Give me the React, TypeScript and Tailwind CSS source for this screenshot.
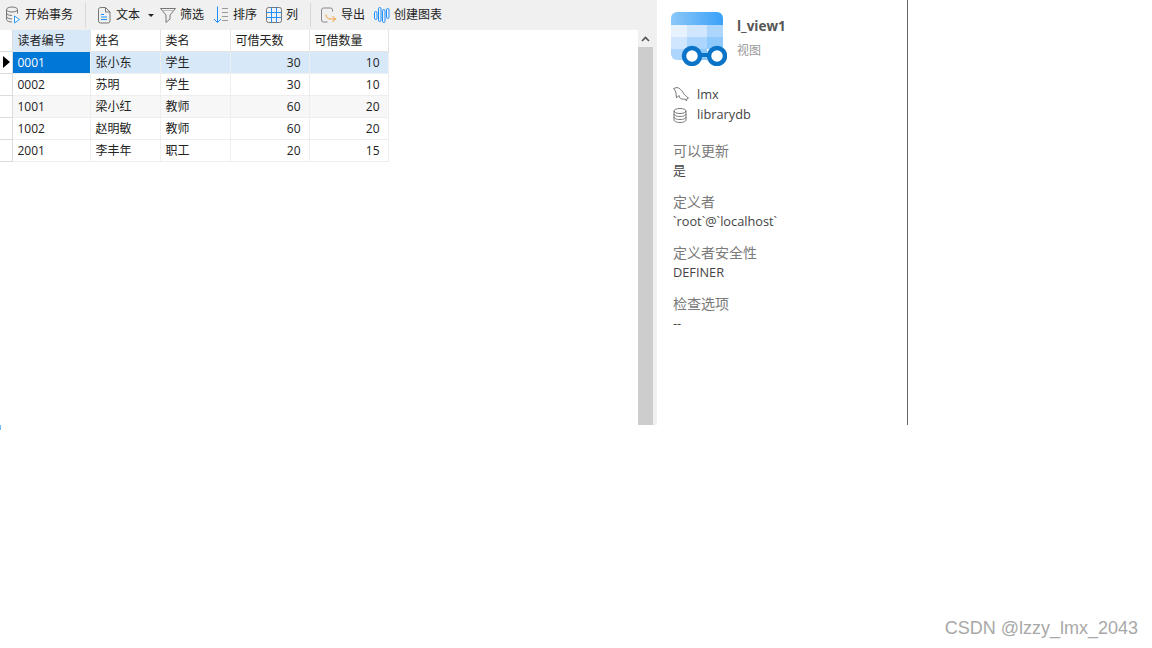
import React from 'react';

const font = "font-['Open_Sans','Noto_Sans_CJK_SC',sans-serif]";

const rows = [
  ['0001', '张小东', '学生', '30', '10'],
  ['0002', '苏明', '学生', '30', '10'],
  ['1001', '梁小红', '教师', '60', '20'],
  ['1002', '赵明敏', '教师', '60', '20'],
  ['2001', '李丰年', '职工', '20', '15'],
];

const headers = ['读者编号', '姓名', '类名', '可借天数', '可借数量'];

const DbIcon = () => (
  <svg width="16" height="18" viewBox="0 0 16 18" fill="none" stroke="#777" strokeWidth="1">
    <ellipse cx="7" cy="3.5" rx="5.5" ry="2.5" />
    <path d="M1.5 3.5v10c0 1.4 2.5 2.5 5.5 2.5M12.5 3.5v4M1.5 7c0 1.4 2.5 2.5 5.5 2.5M1.5 10.5C1.5 11.900 4 13 7 13" />
    <path d="M9.500 10l5 3.500-5 3.500z" fill="#fff" stroke="#2b9af3" />
  </svg>
);

const DocIcon = () => (
  <svg width="14" height="17" viewBox="0 0 14 17" fill="none">
    <path d="M1.500 2.500a2 2 0 0 1 2-2h5l4.500 4.500v9a2 2 0 0 1-2 2h-7.500a2 2 0 0 1-2-2z" stroke="#777" />
    <path d="M8.500 .5v4.500h4.500" stroke="#777" />
    <path d="M4 7.500h3M4 10h6M4 12.500h6" stroke="#1e90ff" />
  </svg>
);

const FunnelIcon = () => (
  <svg width="16" height="16" viewBox="0 0 16 16" fill="none" stroke="#777">
    <path d="M.5 1.500h15l-5.500 6.500v4l-4 3.500v-7.500z" />
    <path d="M3 3.500h10" stroke="#bbb" />
  </svg>
);

const SortIcon = () => (
  <svg width="16" height="18" viewBox="0 0 16 18" fill="none">
    <path d="M4.500 .5v16M1 13l3.500 3.500L8 13" stroke="#1e90ff" />
    <path d="M9 2.500h6M9 6.500h6M9 10.500h6M9 14.500h6" stroke="#999" />
  </svg>
);

const GridIcon = () => (
  <svg width="16" height="16" viewBox="0 0 16 16" fill="none">
    <rect x=".5" y=".5" width="15" height="15" rx="2" stroke="#777" />
    <path d="M5.500 .5v15M10.500 .5v15M.5 5.500h15M.5 10.500h15" stroke="#1e90ff" />
  </svg>
);

const ExportIcon = () => (
  <svg width="16" height="17" viewBox="0 0 16 17" fill="none">
    <path d="M12.500 4.500V3a2 2 0 0 0-2-2h-7a2 2 0 0 0-2 2v10a2 2 0 0 0 2 2h4" stroke="#888" />
    <path d="M6 7.500c0 3 2 4.500 4.500 4.500h5M12.500 9l3 3-3 3" stroke="#f39c2d" />
  </svg>
);

const ChartIcon = () => (
  <svg width="16" height="16" viewBox="0 0 16 16" fill="none" stroke="#1e90ff" strokeWidth="1">
    <rect x=".5" y="4.500" width="2.500" height="8" rx="1.250" />
    <rect x="4.500" y=".5" width="2.500" height="14" rx="1.250" />
    <rect x="8.500" y="2.500" width="2.500" height="13" rx="1.250" />
    <rect x="12.500" y="1.500" width="2.500" height="10" rx="1.250" />
  </svg>
);

const ViewIcon = () => (
  <svg width="56" height="54" viewBox="0 0 56 54">
    <defs>
      <linearGradient id="head" x1="0" x2="1" y1="0" y2="0">
        <stop offset="0" stopColor="#8cc8f8" />
        <stop offset="1" stopColor="#3ba1f8" />
      </linearGradient>
    </defs>
    <path d="M0 18V6a6 6 0 0 1 6-6h40a6 6 0 0 1 6 6v12z" fill="url(#head)" />
    <path d="M0 13h16v13H0z" fill="#e6f2fe" />
    <path d="M16 13h20v13H16z" fill="#cfe6fe" />
    <path d="M36 13h16v13H36z" fill="#acd6fd" />
    <path d="M0 25h16v12H0z" fill="#cfe6fe" />
    <path d="M16 25h20v12H16z" fill="#acd6fd" />
    <path d="M36 25h16v12H36z" fill="#8fc8fb" />
    <path d="M0 37h16v11H6a6 6 0 0 1-6-6z" fill="#acd6fd" />
    <path d="M16 37h20v11H16z" fill="#8fc8fb" />
    <circle cx="21" cy="44" r="8" fill="#fff" stroke="#0a74c9" strokeWidth="4.500" />
    <circle cx="46" cy="44" r="8" fill="#fff" stroke="#0a74c9" strokeWidth="4.500" />
    <path d="M29 43h9" stroke="#0a74c9" strokeWidth="4" />
  </svg>
);

const DolphinIcon = () => (
  <svg width="16" height="16" viewBox="0 0 16 16" fill="none" stroke="#777" strokeWidth="1">
    <path d="M.5 1.500L4 .5c2.500.5 4.500 2.500 6 5 .8 1.500 2 3 3.500 4l2 1.500-1.500.5-.5 2.500-1.500-2c-2 .5-4 0-5.500-1.500L6 8.500 3.500 11 3 6.500 2.500 4z" />
  </svg>
);

const SmallDbIcon = () => (
  <svg width="14" height="15" viewBox="0 0 14 15" fill="none" stroke="#777">
    <ellipse cx="7" cy="3" rx="6" ry="2.500" />
    <path d="M1 3v9c0 1.400 2.700 2.500 6 2.500s6-1.100 6-2.500V3M1 6c0 1.400 2.700 2.500 6 2.500S13 7.400 13 6M1 9c0 1.400 2.700 2.500 6 2.500S13 10.400 13 9" />
  </svg>
);

const Toolbar = () => (
  <div className="h-[30px] flex items-center bg-[#f0f0f0] text-[12px] text-[#222]">
    <span className="ml-[5px] flex"><DbIcon /></span>
    <span className="ml-1">开始事务</span>
    <span className="ml-3 w-px h-[24px] bg-[#d9d9d9]" />
    <span className="ml-[11px] flex"><DocIcon /></span>
    <span className="ml-[5px]">文本</span>
    <span className="ml-2 w-0 h-0 border-x-[3px] border-x-transparent border-t-[3px] border-t-[#222]" />
    <span className="ml-[6px] flex"><FunnelIcon /></span>
    <span className="ml-1">筛选</span>
    <span className="ml-[9px] flex"><SortIcon /></span>
    <span className="ml-1">排序</span>
    <span className="ml-[9px] flex"><GridIcon /></span>
    <span className="ml-1">列</span>
    <span className="ml-3 w-px h-[24px] bg-[#d9d9d9]" />
    <span className="ml-[9px] flex"><ExportIcon /></span>
    <span className="ml-[5px]">导出</span>
    <span className="ml-[9px] flex"><ChartIcon /></span>
    <span className="ml-1">创建图表</span>
  </div>
);

const Grid = () => (
  <table className="table-fixed border-collapse text-[12px] text-[#222] w-[388px]">
    <colgroup>
      <col className="w-[12px]" />
      <col className="w-[78px]" />
      <col className="w-[70px]" />
      <col className="w-[70px]" />
      <col className="w-[79px]" />
      <col className="w-[79px]" />
    </colgroup>
    <thead>
      <tr className="h-[21px]">
        <th className="border-r border-b border-[#dcdcdc] p-0" />
        {headers.map((h, i) => (
          <th
            key={h}
            className={`p-0 pt-[1px] pl-[5px] text-left font-normal border-r border-b border-[#e4e4e4] ${i === 0 ? 'bg-[#d7e8f9]' : 'bg-white'}`}
          >
            {h}
          </th>
        ))}
      </tr>
    </thead>
    <tbody>
      {rows.map((row, r) => (
        <tr key={row[0]} className={`h-[22px] ${r === 0 ? 'bg-[#d7e8f9]' : r === 2 ? 'bg-[#f7f7f7]' : 'bg-white'}`}>
          <td className="p-0 bg-white border-r border-b border-[#dcdcdc]">
            {r === 0 && (
              <span className="block w-0 h-0 ml-[3px] border-y-[6px] border-y-transparent border-l-[7px] border-l-black" />
            )}
          </td>
          {row.map((cell, c) => (
            <td
              key={c}
              className={`p-0 pt-[2px] border-r border-b border-[#eeeeee] ${c > 2 ? 'text-right pr-[8px]' : 'pl-[5px]'} ${r === 0 && c === 0 ? 'bg-[#0078d7] text-white' : ''}`}
            >
              {cell}
            </td>
          ))}
        </tr>
      ))}
    </tbody>
  </table>
);

const Scrollbar = () => (
  <div className="w-[15px] shrink-0 flex flex-col">
    <div className="h-[17px] bg-[#f0f0f0] flex items-center justify-center">
      <svg width="9" height="6" viewBox="0 0 9 6" fill="none" stroke="#505050" strokeWidth="1.600">
        <path d="M1 5l3.500-3.500L8 5" />
      </svg>
    </div>
    <div className="flex-1 bg-[#cdcdcd]" />
  </div>
);

const Field = ({ label, value }: { label: string; value: string }) => (
  <div className="mb-[13px]">
    <div className="text-[14px] leading-[20px] text-[#7a7a7a]">{label}</div>
    <div className="text-[12.75px] leading-[18px] text-[#444]">{value}</div>
  </div>
);

const InfoPanel = () => (
  <div className="w-[251px] shrink-0 border-r border-[#666] pl-[14px]">
    <div className="flex items-start pt-[12px]">
      <ViewIcon />
      <div className="ml-[10px]">
        <div className="text-[13.5px] font-bold leading-[20px] mt-[4px] text-[#555]">l_view1</div>
        <div className="text-[12px] leading-[18px] mt-[6px] text-[#999]">视图</div>
      </div>
    </div>
    <div className="flex items-center mt-[19px] h-[20px] text-[12.75px] text-[#444]">
      <span className="ml-[2px] flex"><DolphinIcon /></span>
      <span className="ml-[8px]">lmx</span>
    </div>
    <div className="flex items-center h-[20px] text-[12.75px] text-[#444]">
      <span className="ml-[2px] flex"><SmallDbIcon /></span>
      <span className="ml-[10px]">librarydb</span>
    </div>
    <div className="mt-[16px] ml-[2px]">
      <Field label="可以更新" value="是" />
      <Field label="定义者" value="`root`@`localhost`" />
      <Field label="定义者安全性" value="DEFINER" />
      <Field label="检查选项" value="--" />
    </div>
  </div>
);

export default function App() {
  return (
    <div className={`w-[1152px] h-[648px] bg-white overflow-hidden flex flex-col ${font}`}>
      <div className="h-[425px] flex shrink-0">
        <div className="w-[657px] shrink-0 flex flex-col">
          <Toolbar />
          <div className="flex-1 flex min-h-0">
            <div className="w-[638px] shrink-0"><Grid /></div>
            <Scrollbar />
            <div className="w-[4px] bg-[#f0f0f0]" />
          </div>
        </div>
        <InfoPanel />
      </div>
      <div className="w-px h-[5px] bg-[#6cbcf5]" />
      <div className="flex-1 flex justify-end items-end pb-[8px] pr-[14px]">
        <span className="text-[18px] leading-[24px] text-[#a8a8a8] font-['Liberation_Sans',sans-serif]">CSDN @lzzy_lmx_2043</span>
      </div>
    </div>
  );
}
